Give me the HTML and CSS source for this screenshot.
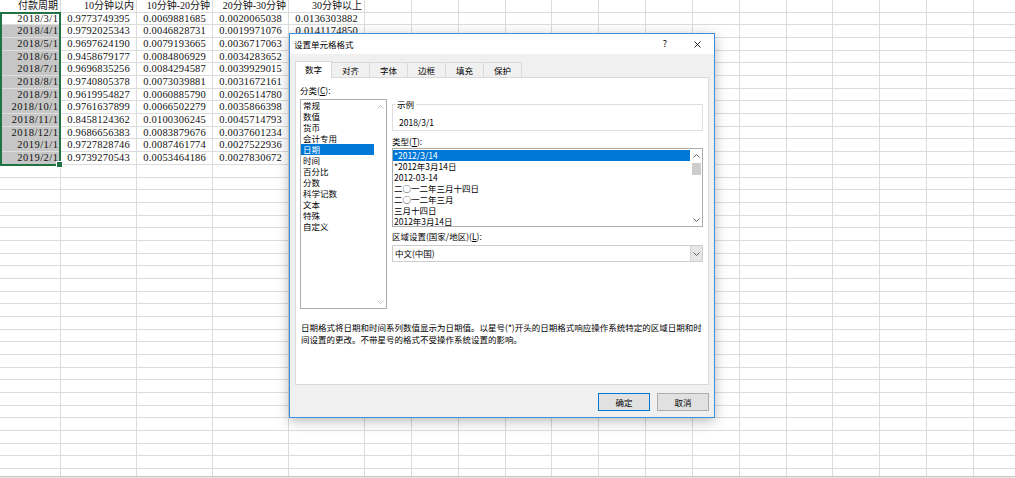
FILE: index.html
```html
<!DOCTYPE html>
<html lang="zh-CN">
<head>
<meta charset="utf-8">
<title>设置单元格格式</title>
<link rel="stylesheet" href="styles.css">
</head>
<body>
<div class="sheet">
  <div class="col col-a">
    <div class="cell hdr">付款周期</div>
    <div class="sel">
      <div class="cell date active">2018/3/1</div>
      <div class="cell date">2018/4/1</div>
      <div class="cell date">2018/5/1</div>
      <div class="cell date">2018/6/1</div>
      <div class="cell date">2018/7/1</div>
      <div class="cell date">2018/8/1</div>
      <div class="cell date">2018/9/1</div>
      <div class="cell date">2018/10/1</div>
      <div class="cell date">2018/11/1</div>
      <div class="cell date">2018/12/1</div>
      <div class="cell date">2019/1/1</div>
      <div class="cell date">2019/2/1</div>
    </div>
  </div>
  <div class="col col-w">
    <div class="cell hdr">10分钟以内</div>
    <div class="cell num">0.9773749395</div>
    <div class="cell num">0.9792025343</div>
    <div class="cell num">0.9697624190</div>
    <div class="cell num">0.9458679177</div>
    <div class="cell num">0.9696835256</div>
    <div class="cell num">0.9740805378</div>
    <div class="cell num">0.9619954827</div>
    <div class="cell num">0.9761637899</div>
    <div class="cell num">0.8458124362</div>
    <div class="cell num">0.9686656383</div>
    <div class="cell num">0.9727828746</div>
    <div class="cell num">0.9739270543</div>
  </div>
  <div class="col col-w">
    <div class="cell hdr">10分钟-20分钟</div>
    <div class="cell num">0.0069881685</div>
    <div class="cell num">0.0046828731</div>
    <div class="cell num">0.0079193665</div>
    <div class="cell num">0.0084806929</div>
    <div class="cell num">0.0084294587</div>
    <div class="cell num">0.0073039881</div>
    <div class="cell num">0.0060885790</div>
    <div class="cell num">0.0066502279</div>
    <div class="cell num">0.0100306245</div>
    <div class="cell num">0.0083879676</div>
    <div class="cell num">0.0087461774</div>
    <div class="cell num">0.0053464186</div>
  </div>
  <div class="col col-w">
    <div class="cell hdr">20分钟-30分钟</div>
    <div class="cell num">0.0020065038</div>
    <div class="cell num">0.0019971076</div>
    <div class="cell num">0.0036717063</div>
    <div class="cell num">0.0034283652</div>
    <div class="cell num">0.0039929015</div>
    <div class="cell num">0.0031672161</div>
    <div class="cell num">0.0026514780</div>
    <div class="cell num">0.0035866398</div>
    <div class="cell num">0.0045714793</div>
    <div class="cell num">0.0037601234</div>
    <div class="cell num">0.0027522936</div>
    <div class="cell num">0.0027830672</div>
  </div>
  <div class="col col-w">
    <div class="cell hdr">30分钟以上</div>
    <div class="cell num">0.0136303882</div>
    <div class="cell num">0.0141174850</div>
  </div>
  <div class="col col-n"></div>
  <div class="col col-n"></div>
  <div class="col col-n"></div>
  <div class="col col-n"></div>
  <div class="col col-n"></div>
  <div class="col col-n"></div>
  <div class="col col-n"></div>
  <div class="col col-n"></div>
  <div class="col col-n"></div>
  <div class="col col-n"></div>
  <div class="col col-n"></div>
  <div class="col col-n"></div>
  <div class="col col-n"></div>
  <div class="col col-n"></div>
</div>
<div class="sheetbar"></div>

<div class="dialog">
  <div class="titlebar">
    <div class="title">设置单元格格式</div>
    <div class="help">?</div>
    <div class="close">
      <svg width="7" height="7" viewBox="0 0 7 7"><path d="M0.5 0.5L6.5 6.5M6.5 0.5L0.5 6.5" stroke="#111" stroke-width="0.9" fill="none"/></svg>
    </div>
  </div>
  <div class="dbody">
    <div class="tabs">
      <div class="tab on">数字</div>
      <div class="tab">对齐</div>
      <div class="tab">字体</div>
      <div class="tab">边框</div>
      <div class="tab">填充</div>
      <div class="tab">保护</div>
    </div>
    <div class="pane">
      <div class="pane-main">
        <div class="left">
          <div class="lbl">分类(<u>C</u>):</div>
          <div class="listbox catlist">
            <div class="items">
              <div class="item">常规</div>
              <div class="item">数值</div>
              <div class="item">货币</div>
              <div class="item">会计专用</div>
              <div class="item on">日期</div>
              <div class="item">时间</div>
              <div class="item">百分比</div>
              <div class="item">分数</div>
              <div class="item">科学记数</div>
              <div class="item">文本</div>
              <div class="item">特殊</div>
              <div class="item">自定义</div>
            </div>
            <div class="vscroll disabled">
              <div class="arrow"><svg width="7" height="4" viewBox="0 0 7 4"><polyline points="0.5,3.5 3.5,0.5 6.5,3.5" fill="none" stroke="#c4c4c4"/></svg></div>
              <div class="arrow"><svg width="7" height="4" viewBox="0 0 7 4"><polyline points="0.5,0.5 3.5,3.5 6.5,0.5" fill="none" stroke="#c4c4c4"/></svg></div>
            </div>
          </div>
        </div>
        <div class="right">
          <fieldset class="sample">
            <legend>示例</legend>
            <div class="sample-val">2018/3/1</div>
          </fieldset>
          <div class="lbl lbl-type">类型(<u>T</u>):</div>
          <div class="listbox typelist">
            <div class="items">
              <div class="item on">*2012/3/14</div>
              <div class="item">*2012年3月14日</div>
              <div class="item">2012-03-14</div>
              <div class="item">二○一二年三月十四日</div>
              <div class="item">二○一二年三月</div>
              <div class="item">三月十四日</div>
              <div class="item">2012年3月14日</div>
            </div>
            <div class="vscroll">
              <div class="arrow"><svg width="7" height="4" viewBox="0 0 7 4"><polyline points="0.5,3.5 3.5,0.5 6.5,3.5" fill="none" stroke="#606060"/></svg></div>
              <div class="thumb"></div>
              <div class="spacer"></div>
              <div class="arrow"><svg width="7" height="4" viewBox="0 0 7 4"><polyline points="0.5,0.5 3.5,3.5 6.5,0.5" fill="none" stroke="#606060"/></svg></div>
            </div>
          </div>
          <div class="lbl lbl-loc">区域设置(国家/地区)(<u>L</u>):</div>
          <div class="dropdown">
            <div class="dd-text">中文(中国)</div>
            <div class="dd-btn"><svg width="7" height="4" viewBox="0 0 7 4"><polyline points="0.5,0.5 3.5,3.5 6.5,0.5" fill="none" stroke="#606060"/></svg></div>
          </div>
        </div>
      </div>
      <p class="desc">日期格式将日期和时间系列数值显示为日期值。以星号(*)开头的日期格式响应操作系统特定的区域日期和时<br>间设置的更改。不带星号的格式不受操作系统设置的影响。</p>
    </div>
    <div class="buttons">
      <div class="btn default">确定</div>
      <div class="btn">取消</div>
    </div>
  </div>
</div>
</body>
</html>
```

FILE: styles.css
```css
* { box-sizing: border-box; }
html, body { margin: 0; padding: 0; }
body {
  width: 1015px;
  height: 478px;
  overflow: hidden;
  position: relative;
  background: #fff;
  font-family: "Liberation Serif", "Noto Sans CJK SC", serif;
}

/* ---------- spreadsheet ---------- */
.sheet {
  display: flex;
  height: 476px;
  overflow: hidden;
  background: repeating-linear-gradient(to bottom,
    transparent 0, transparent 11.68px,
    #dcdcdc 11.68px, #dcdcdc 12.68px);
}
.col {
  flex: none;
  height: 100%;
  border-right: 1px solid #dcdcdc;
}
.col-a { width: 61px; }
.col-w { width: 76px; }
.col-n { width: 46.85px; }

.cell {
  height: 12.68px;
  line-height: 12.68px;
  font-size: 10.5px;
  color: #111;
  text-align: right;
  padding-right: 2px;
  white-space: nowrap;
  overflow: hidden;
}
.hdr { font-size: 10px; padding-right: 2px; }
.num { padding-right: 6px; letter-spacing: 0.2px; }
.date { letter-spacing: 0.5px; padding-right: 1.5px; }

.sel { position: relative; }
.sel .cell {
  background: linear-gradient(to bottom, #c6c6c6 0, #c6c6c6 11.68px, #dedede 11.68px);
}
.sel .cell.active { background: transparent; }
.sel::after {
  content: "";
  position: absolute;
  left: 0; top: -1px; right: -1px; bottom: -1px;
  border: 2px solid #217346;
  pointer-events: none;
}
.sel::before {
  content: "";
  position: absolute;
  right: -3px; bottom: -3px;
  width: 5px; height: 5px;
  background: #217346;
  border: 1px solid #fff;
  z-index: 2;
}

.sheetbar {
  height: 2px;
  border-top: 1px solid #c8c8c8;
  background: #e6e6e6;
}

/* ---------- dialog ---------- */
.dialog {
  position: absolute;
  left: 289px;
  top: 33px;
  width: 426px;
  height: 385px;
  border: 1px solid #3b8fdd;
  background: #f0f0f0;
  box-shadow: 0 3px 12px rgba(0, 0, 0, 0.28);
  font-family: "Noto Sans CJK SC", "Noto Sans", sans-serif;
  font-size: 8.5px;
  color: #000;
  display: flex;
  flex-direction: column;
}
.titlebar {
  flex: none;
  height: 20px;
  background: #fff;
  display: flex;
  align-items: center;
}
.title { flex: 1; padding-left: 4px; line-height: 20px; }
.help { width: 30px; text-align: center; font-size: 9px; line-height: 20px; }
.close {
  width: 34px;
  height: 20px;
  display: flex;
  align-items: center;
  justify-content: center;
}

.dbody {
  flex: 1;
  display: flex;
  flex-direction: column;
  padding: 7px 5px 6px;
}
.tabs {
  flex: none;
  height: 16px;
  display: flex;
  align-items: flex-end;
}
.tab {
  width: 39px;
  height: 15px;
  margin-left: -1px;
  border: 1px solid #d9d9d9;
  border-bottom: none;
  background: #f0f0f0;
  text-align: center;
  line-height: 14px;
}
.tab.on {
  width: 37px;
  height: 17px;
  margin-left: 0;
  margin-bottom: -1px;
  background: #fff;
  position: relative;
  z-index: 1;
  line-height: 14px;
}

.pane {
  flex: none;
  height: 308px;
  background: #fff;
  border: 1px solid #d9d9d9;
  padding: 7px 5px 0 4px;
}
.pane-main { display: flex; gap: 5px; }
.left { width: 87px; flex: none; }
.right { width: 311px; flex: none; }
.lbl { height: 11px; line-height: 11px; white-space: nowrap; }

.listbox {
  display: flex;
  background: #fff;
  border: 1px solid #acacac;
  overflow: hidden;
}
.catlist { margin-top: 3px; height: 210px; }
.items { flex: 1; overflow: hidden; }
.item {
  height: 11px;
  line-height: 11px;
  padding-left: 2px;
  white-space: nowrap;
}
.item.on { background: #0078d7; color: #fff; }

.vscroll {
  width: 12px;
  flex: none;
  display: flex;
  flex-direction: column;
}
.catlist .vscroll { justify-content: space-between; }
.arrow {
  height: 13px;
  display: flex;
  align-items: center;
  justify-content: center;
}
.thumb {
  margin: 1px auto 0;
  width: 9px;
  height: 12px;
  background: #cdcdcd;
}
.spacer { flex: 1; }

.sample {
  margin: 14px 0 0;
  padding: 7px 6px 2px;
  border: 1px solid #dedede;
  min-width: 0;
}
.sample legend {
  padding: 0 2px;
  margin-left: -4px;
  line-height: 11px;
  font-size: 8.5px;
}
.sample-val { line-height: 11px; height: 11px; }

.lbl-type { margin-top: 5px; }
.typelist { margin-top: 1px; height: 79px; }
.typelist .items { padding-top: 1px; }
.typelist .item { padding-left: 1px; }
.typelist .arrow:last-child { height: 12px; }

.lbl-loc { margin-top: 4px; }
.dropdown {
  margin-top: 3px;
  height: 17px;
  display: flex;
  border: 1px solid #cdcdcd;
  background: #fff;
}
.dd-text { flex: 1; padding-left: 2px; line-height: 15px; }
.dd-btn {
  width: 12px;
  background: #e6e6e6;
  border-left: 1px solid #d4d4d4;
  display: flex;
  align-items: center;
  justify-content: center;
}

.desc {
  margin: 12px 0 0 1px;
  line-height: 12px;
  white-space: nowrap;
}

.buttons {
  flex: none;
  margin-top: 8px;
  display: flex;
  justify-content: flex-end;
  gap: 7px;
}
.btn {
  width: 52px;
  height: 18px;
  border: 1px solid #adadad;
  background: #e1e1e1;
  text-align: center;
  line-height: 16px;
}
.btn.default { border-color: #0078d7; }
```
